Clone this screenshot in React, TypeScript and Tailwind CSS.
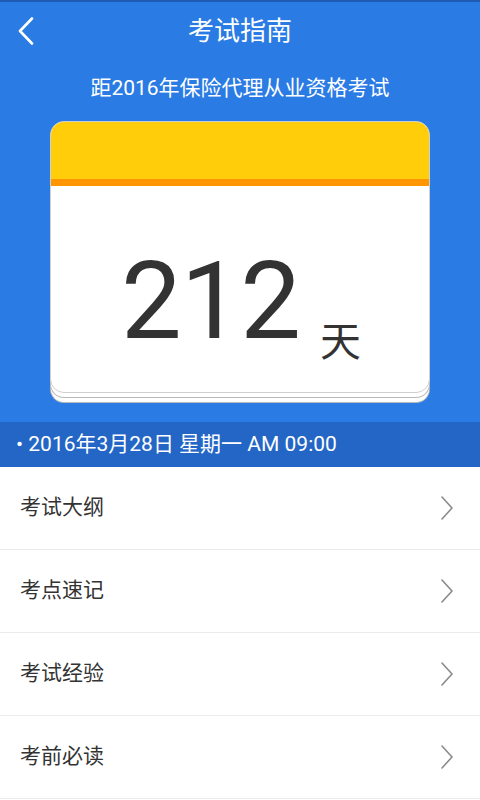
const rows = ["考试大纲", "考点速记", "考试经验", "考前必读"]

function Chevron({ className }: { className?: string }) {
  return (
    <svg className={className} viewBox="0 0 12 24" fill="none">
      <path d="M1 1 L11 12 L1 23" stroke="currentColor" strokeWidth={1.6} strokeLinecap="round" strokeLinejoin="round" />
    </svg>
  )
}

export default function App() {
  return (
    <div
      className="w-[480px] h-[800px] overflow-hidden bg-white"
      style={{ fontFamily: "Roboto, 'Noto Sans CJK SC', sans-serif" }}
    >
      <div className="bg-[#2a7be3] border-t-2 border-[#1e5cb3]">
        <div className="grid grid-cols-[60px_1fr_60px] h-[58px] items-center">
          <button className="flex items-center justify-center h-full text-white">
            <svg className="w-[16px] h-[28px] -translate-x-[4px]" viewBox="0 0 16 28" fill="none">
              <path d="M14 1.5 L2 14 L14 26.5" stroke="currentColor" strokeWidth={2.6} strokeLinecap="round" strokeLinejoin="round" />
            </svg>
          </button>
          <h1 className="text-center text-white text-[26px] leading-none -mt-[1px]">考试指南</h1>
          <div />
        </div>
        <p className="text-center text-white text-[21px] leading-[28px] pt-[14px]">
          距2016年保险代理从业资格考试
        </p>
        <div className="px-[50px] pt-[19px] pb-[29px]">
          <div className="rounded-[14px] overflow-hidden border border-[#cfcfcf] bg-white shadow-[0_5px_0_-1px_#ffffff,0_5px_0_0_#b9b9b9,0_10px_0_-1px_#ffffff,0_10px_0_0_#b9b9b9]">
            <div className="h-[57px] bg-[#ffcd0a]" />
            <div className="h-[7px] bg-[#ff9502]" />
            <div className="h-[206px] flex items-start justify-center pl-[2px]">
              <span className="text-[108px] leading-none text-[#333333] mt-[61px] tracking-[-1px]">212</span>
              <span className="text-[41px] leading-none text-[#333333] ml-[20px] mt-[136px]">天</span>
            </div>
          </div>
        </div>
      </div>
      <div className="h-[45px] bg-[#2366c5] flex items-center px-[16px] text-white text-[21px]">
        • 2016年3月28日 星期一 AM 09:00
      </div>
      <ul>
        {rows.map((r) => (
          <li key={r} className="h-[83px] flex items-center justify-between pl-[20px] pr-[27px] border-b border-[#ebebeb]">
            <span className="text-[21px] text-[#333333]">{r}</span>
            <Chevron className="w-[12px] h-[24px] text-[#8a8a8a]" />
          </li>
        ))}
      </ul>
    </div>
  )
}
